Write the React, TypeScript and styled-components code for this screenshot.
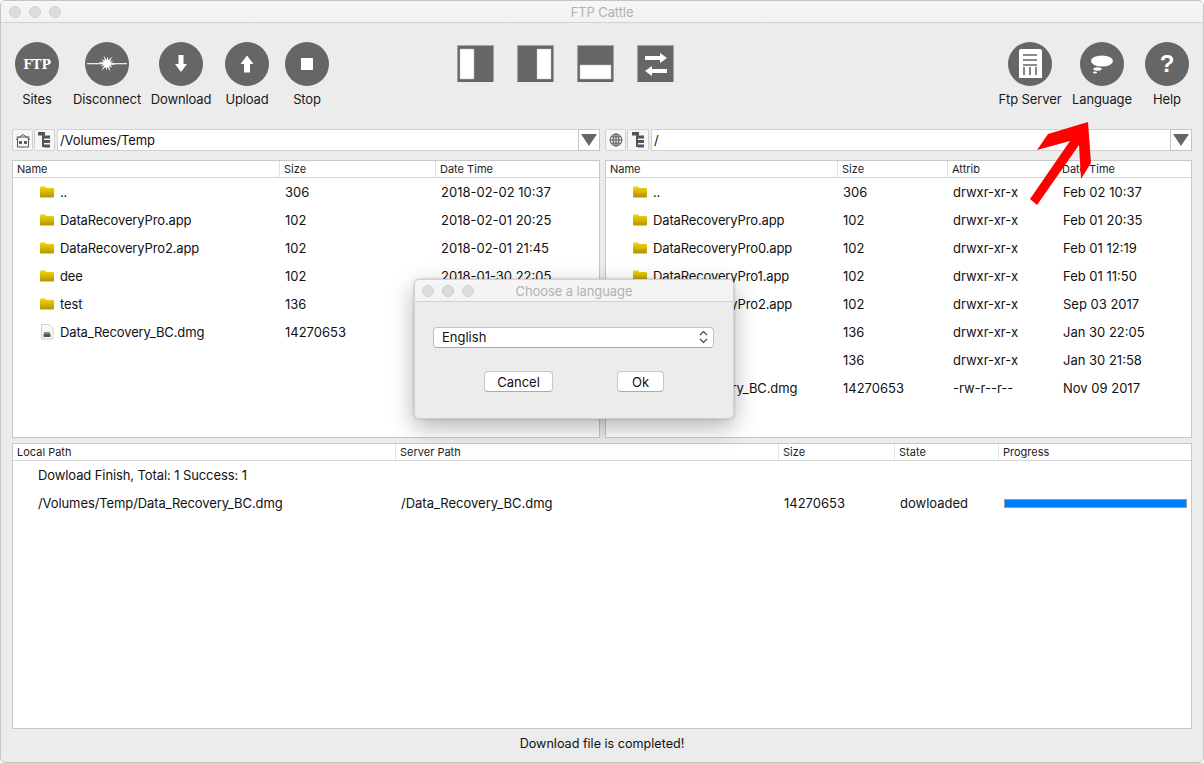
import React from "react";
import styled, { createGlobalStyle } from "styled-components";

const Global = createGlobalStyle`
  html, body { margin: 0; padding: 0; background: #fff; }
  #root { width: 1204px; height: 763px; }
  * { box-sizing: border-box; }
`;

const Win = styled.div`
  position: relative;
  width: 1204px;
  height: 763px;
  display: flex;
  flex-direction: column;
  background: #ececec;
  border: 1px solid #c4c4c4;
  border-radius: 5px;
  overflow: hidden;
  font-family: Inter, "Liberation Sans", Arial, sans-serif;
  font-size: 13px;
  color: #111;
`;
const TitleBar = styled.div<{ $h: number }>`
  position: relative;
  flex: none;
  height: ${(p) => p.$h}px;
  display: flex;
  align-items: center;
  justify-content: center;
  padding-top: 1px;
  letter-spacing: -0.1px;
  background: linear-gradient(#f6f6f6, #f2f2f2);
  border-bottom: 1px solid #d2d2d2;
  color: #b2b2b2;
`;
const Lights = styled.div`
  position: absolute;
  left: 8px;
  top: 5px;
  display: flex;
  gap: 8px;
`;
const DialogLights = styled(Lights)`
  left: 7px;
`;
const Light = styled.span`
  width: 12px;
  height: 12px;
  border-radius: 50%;
  background: #dcdcdc;
  border: 1px solid #d0d0d0;
`;
const Toolbar = styled.div`
  flex: none;
  height: 106px;
  display: flex;
  align-items: flex-start;
  padding: 19px 14px 0;
`;
const ToolGroup = styled.div<{ $auto?: boolean; $ml?: number }>`
  display: flex;
  margin-left: ${(p) => (p.$auto ? "auto" : `${p.$ml ?? 0}px`)};
`;
const ToolButton = styled.div<{ $w: number; $ml: number }>`
  width: ${(p) => p.$w}px;
  margin-left: ${(p) => p.$ml}px;
  display: flex;
  flex-direction: column;
  align-items: center;
  gap: 5px;
  white-space: nowrap;
`;
const ToolLabel = styled.span`
  line-height: 16px;
  font-size: 13px;
  letter-spacing: -0.12px;
  color: #1a1a1a;
`;
const ToolCircle = styled.span`
  display: block;
  width: 44px;
  height: 44px;
  border-radius: 50%;
  background: #666;
`;
const LayoutRow = styled.div`
  display: flex;
  gap: 23px;
  padding-top: 3px;
`;
const LayoutIcon = styled.span`
  display: block;
  width: 37px;
  height: 37px;
  background: #666;
  border: 1px solid #a6a6a6;
  border-bottom: none;
`;
const Glyph = styled.svg`
  display: block;
`;
const Panels = styled.div`
  flex: none;
  display: grid;
  grid-template-columns: 588px 587px;
  column-gap: 5px;
  padding: 0 11px;
`;
const Panel = styled.div`
  display: flex;
  flex-direction: column;
  gap: 9px;
`;
const AddressBar = styled.div`
  height: 22px;
  display: flex;
  gap: 1px;
`;
const AddrButton = styled.span<{ $w: number }>`
  flex: none;
  width: ${(p) => p.$w}px;
  display: flex;
  align-items: center;
  justify-content: center;
  background: #f6f6f6;
  border: 1px solid #d2d2d2;
  border-radius: 2px;
`;
const AddrInput = styled.div`
  flex: 1;
  display: flex;
  align-items: center;
  padding: 0 0 1px 2px;
  margin-left: 1px;
  background: #fff;
  border: 1px solid #d2d2d2;
  border-right: none;
  font-size: 13px;
  letter-spacing: -0.12px;
`;
const AddrDrop = styled.span`
  flex: none;
  width: 22px;
  margin-left: -1px;
  display: flex;
  align-items: center;
  justify-content: center;
  background: #fff;
  border: 1px solid #c6c6c6;
`;
const Triangle = styled.span`
  width: 0;
  height: 0;
  border-left: 8px solid transparent;
  border-right: 8px solid transparent;
  border-top: 12px solid #666;
`;
const Table = styled.div<{ $h: number }>`
  height: ${(p) => p.$h}px;
  background: #fff;
  border: 1px solid #c8c8c8;
`;
const HeaderRow = styled.div<{ $cols: string }>`
  height: 17px;
  display: grid;
  grid-template-columns: ${(p) => p.$cols};
  border-bottom: 1px solid #d6d6d6;
  background: #fff;
`;
const HeadCell = styled.div`
  height: 16px;
  display: flex;
  align-items: center;
  padding-left: 4px;
  font-size: 11px;
  color: #222;
  white-space: nowrap;
  & + & {
    border-left: 1px solid #e2e2e2;
  }
`;
const Row = styled.div<{ $cols: string }>`
  height: 28px;
  display: grid;
  grid-template-columns: ${(p) => p.$cols};
  align-items: center;
`;
const Cell = styled.div`
  padding-left: 6px;
  white-space: nowrap;
  overflow: hidden;
`;
const NameCell = styled(Cell)`
  display: flex;
  align-items: center;
  gap: 6px;
  padding-left: 27px;
  letter-spacing: -0.13px;
`;
const PathCell = styled(Cell)`
  padding-left: 25px;
  letter-spacing: -0.1px;
`;
const Progress = styled.div`
  height: 9px;
  margin: 0 4px 0 6px;
  border: 1px solid #9a9a9a;
  background: #fff;
`;
const ProgressFill = styled.div`
  height: 100%;
  background: #007dfb;
`;
const Transfers = styled.div`
  flex: none;
  margin: 5px 11px 0;
`;
const StatusBar = styled.div`
  flex: 1;
  display: flex;
  align-items: center;
  justify-content: center;
  padding-bottom: 5px;
  font-size: 12.6px;
  color: #111;
`;
const Dialog = styled.div`
  position: absolute;
  left: 413px;
  top: 278px;
  width: 320px;
  height: 140px;
  background: #ececec;
  border-radius: 5px;
  border: 1px solid #d0d0d0;
  box-shadow: 0 8px 24px rgba(0, 0, 0, 0.3), 0 0 3px rgba(0, 0, 0, 0.2);
  overflow: hidden;
`;
const DialogBody = styled.div`
  padding: 25px 19px 0 18px;
  display: flex;
  flex-direction: column;
  gap: 23px;
`;
const Select = styled.div`
  height: 21px;
  display: flex;
  align-items: center;
  justify-content: space-between;
  padding: 0 5px 1px 8px;
  background: #fff;
  border: 1px solid #c2c2c2;
  border-bottom-color: #aaa;
  border-radius: 4px;
  font-size: 13px;
`;
const DialogActions = styled.div`
  display: flex;
  padding-left: 51px;
  gap: 64px;
`;
const DialogButton = styled.div<{ $w: number }>`
  width: ${(p) => p.$w}px;
  height: 21px;
  display: flex;
  align-items: center;
  justify-content: center;
  background: #fff;
  border: 1px solid #c6c6c6;
  border-bottom-color: #aaa;
  border-radius: 4px;
  font-size: 13px;
`;
const Arrow = styled.svg`
  position: absolute;
  left: -1px;
  top: -1px;
  pointer-events: none;
`;

const star = (() => {
  const pts: string[] = [];
  const n = 12;
  for (let i = 0; i < n * 2; i++) {
    const r = i % 2 === 0 ? (i % 4 === 0 ? 9 : 7) : 3.5;
    const a = (i * Math.PI) / n + 0.13;
    pts.push(`${(22 + r * Math.cos(a)).toFixed(1)},${(21.5 + r * Math.sin(a)).toFixed(1)}`);
  }
  return pts.join(" ");
})();

const icon = (children: React.ReactNode) => (
  <ToolCircle>
    <Glyph width="44" height="44" viewBox="0 0 44 44">
      {children}
    </Glyph>
  </ToolCircle>
);

const FtpIcon = icon(
  <text x="22" y="26.5" textAnchor="middle" fontFamily="'DejaVu Serif', serif" fontWeight="bold" fontSize="12.5" fill="#fff">
    FTP
  </text>
);
const DiscIcon = icon(
  <>
    <rect x="2" y="21" width="40" height="1.3" fill="#e8e8e8" />
    <polygon points={star} fill="#fff" />
  </>
);
const DownIcon = icon(<polygon points="19.5,13 24.5,13 24.5,22 28,22 22,30 16,22 19.5,22" fill="#fff" />);
const UpIcon = icon(<polygon points="22,13.5 28.5,22 25,22 25,30.5 19,30.5 19,22 15.5,22" fill="#fff" />);
const StopIcon = icon(<rect x="16" y="16" width="12" height="12" fill="#fff" />);
const ServerIcon = icon(
  <>
    <path d="M13 7 h19 a2 2 0 0 1 2 2 v27 h-23 v-27 a2 2 0 0 1 2 -2z" fill="#fff" />
    <path d="M15 13h14M15 18h14M15 23h14" stroke="#666" strokeWidth="1.4" />
    <path d="M16 25v8M22 25v8M28 25v8" stroke="#666" strokeWidth="1.6" />
  </>
);
const LangIcon = icon(
  <>
    <ellipse cx="22" cy="19" rx="11" ry="5.5" fill="#fff" />
    <ellipse cx="17.5" cy="27" rx="4.2" ry="1.7" fill="#fff" />
    <ellipse cx="15" cy="30.5" rx="2.2" ry="0.9" fill="#fff" />
  </>
);
const HelpIcon = icon(
  <text x="22" y="30" textAnchor="middle" fontFamily="'Liberation Sans', sans-serif" fontWeight="bold" fontSize="24" fill="#fff">
    ?
  </text>
);

const Home = () => (
  <Glyph width="16" height="15" viewBox="0 0 16 15" fill="none" stroke="#555" strokeWidth="1">
    <path d="M1 6.5 L8 1.5 L15 6.5 M2.5 6 V14 H13.5 V6" />
    <path d="M4.5 8.5h2v2h-2zM9.5 8.5h2v2h-2z" fill="#555" />
    <path d="M1.5 4h13" />
  </Glyph>
);
const Globe = () => (
  <Glyph width="14" height="14" viewBox="0 0 14 14" fill="none" stroke="#555" strokeWidth="0.9">
    <circle cx="7" cy="7" r="6" fill="#ddd" />
    <ellipse cx="7" cy="7" rx="2.8" ry="6" />
    <path d="M7 1v12M1 7h12M2 3.8h10M2 10.2h10" />
  </Glyph>
);
const Tree = () => (
  <Glyph width="13" height="16" viewBox="0 0 13 16">
    <rect x="0" y="0" width="7" height="3.5" fill="#555" />
    <rect x="4" y="3" width="2" height="12" fill="#555" />
    <rect x="6" y="3.5" width="6" height="3" fill="#555" />
    <rect x="6" y="8" width="6" height="3" fill="#555" />
    <rect x="6" y="12.5" width="6" height="3" fill="#555" />
  </Glyph>
);
const Folder = () => (
  <Glyph width="14" height="12" viewBox="0 0 14 12">
    <defs>
      <linearGradient id="fg" x1="0" y1="0" x2="0" y2="1">
        <stop offset="0" stopColor="#f4d800" />
        <stop offset="1" stopColor="#b39300" />
      </linearGradient>
    </defs>
    <path d="M1 0.5 h4 l1.5 1.5 h6.5 a1 1 0 0 1 1 1 v7.5 a1 1 0 0 1 -1 1 h-12 a1 1 0 0 1 -1 -1 v-9.5 a1 1 0 0 1 1 -0.5z" fill="url(#fg)" />
  </Glyph>
);
const Dmg = () => (
  <Glyph width="14" height="16" viewBox="0 0 14 16">
    <path d="M1.5 0.5 h8 l3.5 3.5 v11 h-11.5 z" fill="#f8f8f8" stroke="#d0d0d0" />
    <rect x="4" y="8" width="6" height="2" fill="#888" />
    <rect x="3.5" y="10" width="7" height="3" fill="#555" />
  </Glyph>
);

const leftCols = "266px 156px 1fr";
const rightCols = "231px 110px 110px 1fr";
const transferCols = "382px 383px 116px 104px 1fr";

const leftRows = [
  ["..", "306", "2018-02-02 10:37"],
  ["DataRecoveryPro.app", "102", "2018-02-01 20:25"],
  ["DataRecoveryPro2.app", "102", "2018-02-01 21:45"],
  ["dee", "102", "2018-01-30 22:05"],
  ["test", "136", "2018-01-30 21:58"],
  ["Data_Recovery_BC.dmg", "14270653", "2017-11-09 10:12"],
];
const rightRows = [
  ["..", "306", "drwxr-xr-x", "Feb 02 10:37"],
  ["DataRecoveryPro.app", "102", "drwxr-xr-x", "Feb 01 20:35"],
  ["DataRecoveryPro0.app", "102", "drwxr-xr-x", "Feb 01 12:19"],
  ["DataRecoveryPro1.app", "102", "drwxr-xr-x", "Feb 01 11:50"],
  ["DataRecoveryPro2.app", "102", "drwxr-xr-x", "Sep 03 2017"],
  ["dee", "136", "drwxr-xr-x", "Jan 30 22:05"],
  ["test", "136", "drwxr-xr-x", "Jan 30 21:58"],
  ["Data_Recovery_BC.dmg", "14270653", "-rw-r--r--", "Nov 09 2017"],
];

export default function App() {
  return (
    <Win>
      <Global />
      <TitleBar $h={22}>
        <Lights>
          <Light />
          <Light />
          <Light />
        </Lights>
        FTP Cattle
      </TitleBar>
      <Toolbar>
        <ToolGroup>
          <ToolButton $w={44} $ml={0}>{FtpIcon}<ToolLabel>Sites</ToolLabel></ToolButton>
          <ToolButton $w={68} $ml={14}>{DiscIcon}<ToolLabel>Disconnect</ToolLabel></ToolButton>
          <ToolButton $w={60} $ml={10}>{DownIcon}<ToolLabel>Download</ToolLabel></ToolButton>
          <ToolButton $w={44} $ml={14}>{UpIcon}<ToolLabel>Upload</ToolLabel></ToolButton>
          <ToolButton $w={44} $ml={16}>{StopIcon}<ToolLabel>Stop</ToolLabel></ToolButton>
        </ToolGroup>
        <ToolGroup $ml={128}>
          <LayoutRow>
            <LayoutIcon>
              <Glyph width="35" height="36" viewBox="0 0 35 36"><rect x="2" y="3" width="14" height="30" fill="#fff" stroke="#bbb" strokeWidth="0.5" /></Glyph>
            </LayoutIcon>
            <LayoutIcon>
              <Glyph width="35" height="36" viewBox="0 0 35 36"><rect x="19" y="3" width="14" height="30" fill="#fff" stroke="#bbb" strokeWidth="0.5" /></Glyph>
            </LayoutIcon>
            <LayoutIcon>
              <Glyph width="35" height="36" viewBox="0 0 35 36"><rect x="2" y="19" width="31" height="14" fill="#fff" stroke="#bbb" strokeWidth="0.5" /></Glyph>
            </LayoutIcon>
            <LayoutIcon>
              <Glyph width="35" height="36" viewBox="0 0 35 36">
                <polygon points="7,10 22,10 22,7 29,12 22,17 22,14 7,14" fill="#fff" />
                <polygon points="29,23 14,23 14,20 7,25 14,30 14,27 29,27" fill="#fff" />
              </Glyph>
            </LayoutIcon>
          </LayoutRow>
        </ToolGroup>
        <ToolGroup $auto>
          <ToolButton $w={64} $ml={0}>{ServerIcon}<ToolLabel>Ftp Server</ToolLabel></ToolButton>
          <ToolButton $w={60} $ml={10}>{LangIcon}<ToolLabel>Language</ToolLabel></ToolButton>
          <ToolButton $w={44} $ml={13}>{HelpIcon}<ToolLabel>Help</ToolLabel></ToolButton>
        </ToolGroup>
      </Toolbar>
      <Panels>
        <Panel>
          <AddressBar>
            <AddrButton $w={21}><Home /></AddrButton>
            <AddrButton $w={21}><Tree /></AddrButton>
            <AddrInput>/Volumes/Temp</AddrInput>
            <AddrDrop><Triangle /></AddrDrop>
          </AddressBar>
          <Table $h={278}>
            <HeaderRow $cols={leftCols}>
              <HeadCell>Name</HeadCell>
              <HeadCell>Size</HeadCell>
              <HeadCell>Date Time</HeadCell>
            </HeaderRow>
            {leftRows.map((r) => (
              <Row $cols={leftCols} key={r[0]}>
                <NameCell>{r[0].endsWith(".dmg") ? <Dmg /> : <Folder />}{r[0]}</NameCell>
                <Cell>{r[1]}</Cell>
                <Cell>{r[2]}</Cell>
              </Row>
            ))}
          </Table>
        </Panel>
        <Panel>
          <AddressBar>
            <AddrButton $w={21}><Globe /></AddrButton>
            <AddrButton $w={22}><Tree /></AddrButton>
            <AddrInput>/</AddrInput>
            <AddrDrop><Triangle /></AddrDrop>
          </AddressBar>
          <Table $h={278}>
            <HeaderRow $cols={rightCols}>
              <HeadCell>Name</HeadCell>
              <HeadCell>Size</HeadCell>
              <HeadCell>Attrib</HeadCell>
              <HeadCell>Date Time</HeadCell>
            </HeaderRow>
            {rightRows.map((r) => (
              <Row $cols={rightCols} key={r[0]}>
                <NameCell>{r[0].endsWith(".dmg") ? <Dmg /> : <Folder />}{r[0]}</NameCell>
                <Cell>{r[1]}</Cell>
                <Cell>{r[2]}</Cell>
                <Cell>{r[3]}</Cell>
              </Row>
            ))}
          </Table>
        </Panel>
      </Panels>
      <Transfers>
        <Table $h={286}>
          <HeaderRow $cols={transferCols}>
            <HeadCell>Local Path</HeadCell>
            <HeadCell>Server Path</HeadCell>
            <HeadCell>Size</HeadCell>
            <HeadCell>State</HeadCell>
            <HeadCell>Progress</HeadCell>
          </HeaderRow>
          <Row $cols="1fr">
            <PathCell>Dowload Finish, Total: 1 Success: 1</PathCell>
          </Row>
          <Row $cols={transferCols}>
            <PathCell>/Volumes/Temp/Data_Recovery_BC.dmg</PathCell>
            <Cell>/Data_Recovery_BC.dmg</Cell>
            <Cell>14270653</Cell>
            <Cell>dowloaded</Cell>
            <Progress><ProgressFill style={{ width: "100%" }} /></Progress>
          </Row>
        </Table>
      </Transfers>
      <StatusBar>Download file is completed!</StatusBar>
      <Dialog>
        <TitleBar $h={22}>
          <DialogLights>
            <Light />
            <Light />
            <Light />
          </DialogLights>
          Choose a language
        </TitleBar>
        <DialogBody>
          <Select>
            English
            <Glyph width="9" height="14" viewBox="0 0 9 14" fill="none" stroke="#444" strokeWidth="1.2">
              <path d="M1 5 L4.5 1.5 L8 5 M1 9 L4.5 12.5 L8 9" />
            </Glyph>
          </Select>
          <DialogActions>
            <DialogButton $w={69}>Cancel</DialogButton>
            <DialogButton $w={47}>Ok</DialogButton>
          </DialogActions>
        </DialogBody>
      </Dialog>
      <Arrow width="1204" height="763" viewBox="0 0 1204 763">
        <polygon points="1088,122 1048,134 1037,150 1070,141 1030,199 1037,205 1079,145 1081,179 1091,163" fill="#ff0000" />
      </Arrow>
    </Win>
  );
}
